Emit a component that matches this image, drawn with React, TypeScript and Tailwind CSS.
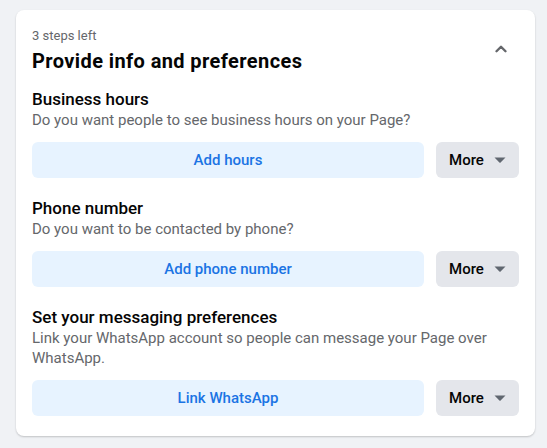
import { ChevronUp } from 'lucide-react';

const steps = [
  {
    title: 'Business hours',
    text: 'Do you want people to see business hours on your Page?',
    action: 'Add hours',
  },
  {
    title: 'Phone number',
    text: 'Do you want to be contacted by phone?',
    action: 'Add phone number',
  },
  {
    title: 'Set your messaging preferences',
    text: 'Link your WhatsApp account so people can message your Page over WhatsApp.',
    action: 'Link WhatsApp',
  },
];

const Caret = () => (
  <svg width="12" height="6" viewBox="0 0 12 6" className="fill-[#606770]">
    <path d="M0.5 0.5 L11.5 0.5 L6.6 5.4 Q6 6 5.4 5.4 Z" />
  </svg>
);

export default function App() {
  return (
    <div className="min-h-[448px] bg-[#f0f2f5] pt-[10px] px-4 font-['Roboto',sans-serif]">
      <div className="w-[519px] rounded-lg bg-white px-4 pt-[18px] pb-5 shadow-[0_1px_2px_rgba(0,0,0,0.2)]">
        <div className="flex items-start justify-between">
          <div>
            <div className="text-[13px] leading-[16px] text-[#65676b]">3 steps left</div>
            <h2 className="mt-[5px] text-[20px] font-bold leading-[24px] tracking-[0.4px] text-[#050505]">
              Provide info and preferences
            </h2>
          </div>
          <button className="mt-[3px] flex h-9 w-9 items-center justify-center rounded-full">
            <ChevronUp className="h-[18px] w-[18px] text-[#65676b]" strokeWidth={3.2} />
          </button>
        </div>

        {steps.map((s, i) => (
          <div key={s.title} className={i === 0 ? 'mt-[15px]' : 'mt-[19px]'}>
            <div className="text-[17px] font-medium leading-[22px] text-[#050505]">{s.title}</div>
            <div className="text-[15px] leading-[20px] text-[#65676b]">{s.text}</div>
            <div className="mt-3 flex gap-3">
              <button className="flex h-9 flex-1 items-center justify-center rounded-md bg-[#e7f3ff] text-[15px] font-medium text-[#1b74e4]">
                {s.action}
              </button>
              <button className="flex h-9 w-[83px] items-center justify-center gap-[10px] rounded-md bg-[#e4e6eb] text-[15px] font-medium text-[#050505]">
                More
                <Caret />
              </button>
            </div>
          </div>
        ))}
      </div>
    </div>
  );
}
